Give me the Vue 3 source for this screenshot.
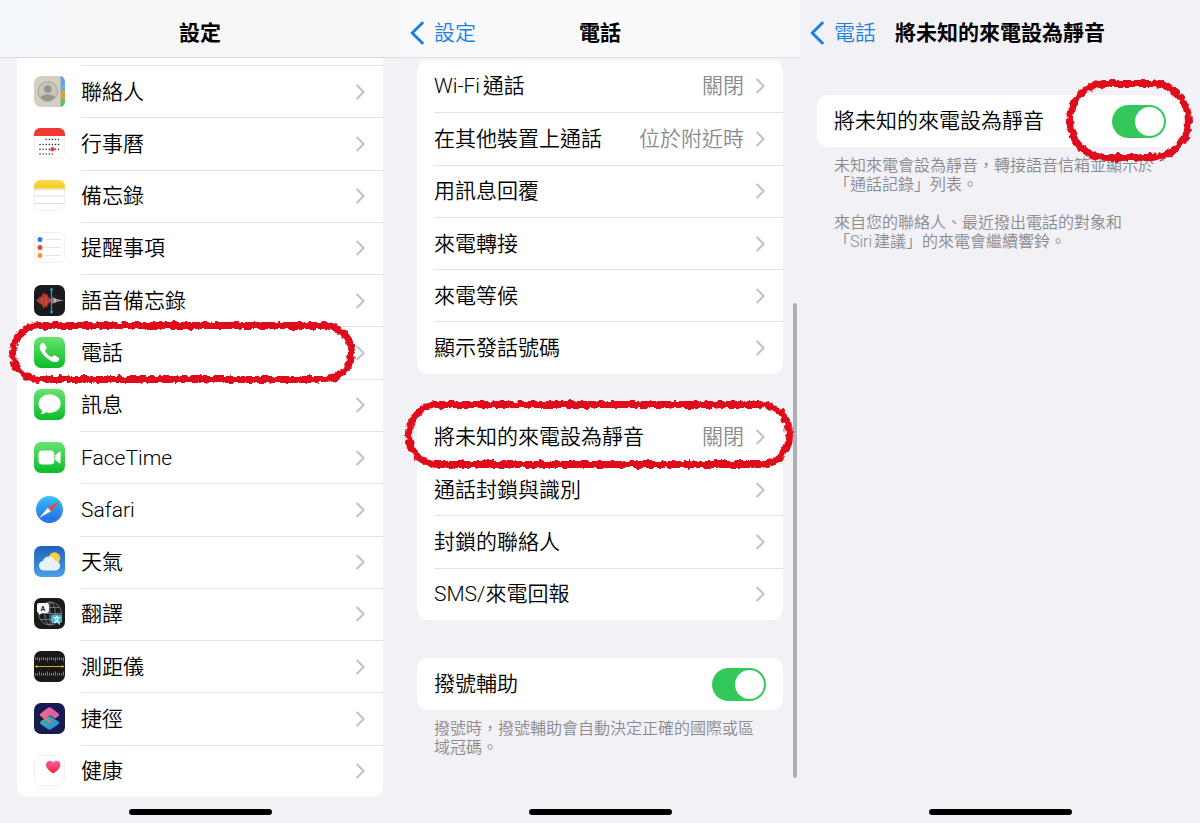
<template>
  <main class="screens" lang="zh-Hant">
    <svg class="defs" width="0" height="0" aria-hidden="true">
      <defs>
        <filter id="crayon" x="-5%" y="-15%" width="110%" height="130%">
          <feTurbulence type="fractalNoise" baseFrequency="0.16" numOctaves="3" seed="4" result="noise" />
          <feDisplacementMap in="SourceGraphic" in2="noise" scale="6" xChannelSelector="R" yChannelSelector="G" />
        </filter>
        <linearGradient id="green" x2="0" y2="1"><stop stop-color="#67e36f" /><stop offset="1" stop-color="#0abc28" /></linearGradient>
        <linearGradient id="yellow" x2="0" y2="1"><stop stop-color="#f9dc55" /><stop offset="1" stop-color="#f3c71c" /></linearGradient>
        <linearGradient id="sky" x2="0" y2="1"><stop stop-color="#1f62b8" /><stop offset="1" stop-color="#4a9fe8" /></linearGradient>
        <linearGradient id="compass" x2="0" y2="1"><stop stop-color="#35c0f7" /><stop offset="1" stop-color="#2365e0" /></linearGradient>
        <linearGradient id="pink" x2="0" y2="1"><stop stop-color="#f45fa8" /><stop offset="1" stop-color="#f4252f" /></linearGradient>
        <linearGradient id="coral" x1="1" x2="0" y2="1"><stop stop-color="#d952c6" /><stop offset="1" stop-color="#f4766a" /></linearGradient>
        <linearGradient id="aqua" y2="1"><stop stop-color="#36b889" /><stop offset="1" stop-color="#1f8df2" /></linearGradient>
      </defs>
    </svg>

    <section class="screen">
      <header class="bar bar-grey">
        <h1>設定</h1>
      </header>
      <ul class="card card-open">
        <li v-for="app in apps" :key="app.name">
          <a class="row" href="#">
            <svg class="icon" viewBox="0 0 31 31" aria-hidden="true" v-html="icons[app.icon]"></svg>
            <span class="cell">
              <span class="label">{{ app.name }}</span>
              <svg class="chevron" viewBox="0 0 9 16" aria-hidden="true"><path d="M1.2 1.5 7.6 8l-6.4 6.5" /></svg>
            </span>
          </a>
          <span v-if="app.marked" class="ring ring-app"></span>
        </li>
      </ul>
      <div class="home"></div>
    </section>

    <section class="screen">
      <header class="bar bar-light">
        <a class="back" href="#">
          <svg viewBox="0 0 14 24" aria-hidden="true"><path d="M12.3 2 2.2 12l10.1 10" /></svg>設定
        </a>
        <h1>電話</h1>
      </header>
      <ul class="card card-calls">
        <li v-for="item in calls" :key="item.name">
          <a class="row" href="#">
            <span class="cell">
              <span class="label">{{ item.name }}</span>
              <span class="value">{{ item.value }}</span>
              <svg class="chevron" viewBox="0 0 9 16" aria-hidden="true"><path d="M1.2 1.5 7.6 8l-6.4 6.5" /></svg>
            </span>
          </a>
        </li>
      </ul>
      <ul class="card card-blocking">
        <li v-for="item in blocking" :key="item.name">
          <a class="row" href="#">
            <span class="cell">
              <span class="label">{{ item.name }}</span>
              <span class="value">{{ item.value }}</span>
              <svg class="chevron" viewBox="0 0 9 16" aria-hidden="true"><path d="M1.2 1.5 7.6 8l-6.4 6.5" /></svg>
            </span>
          </a>
          <span v-if="item.marked" class="ring ring-item"></span>
        </li>
      </ul>
      <div class="card">
        <label class="row switch-row" for="assist">
          <span class="label">撥號輔助</span>
          <input id="assist" v-model="dialAssist" class="switch" type="checkbox" />
        </label>
      </div>
      <div class="note note-end">
        <p>撥號時，撥號輔助會自動決定正確的國際或區域冠碼。</p>
      </div>
      <div class="scroll-thumb"></div>
      <div class="home"></div>
    </section>

    <section class="screen">
      <header class="bar">
        <a class="back" href="#">
          <svg viewBox="0 0 14 24" aria-hidden="true"><path d="M12.3 2 2.2 12l10.1 10" /></svg>電話
        </a>
        <h1>將未知的來電設為靜音</h1>
      </header>
      <div class="card card-silence">
        <label class="row switch-row" for="silence">
          <span class="label">將未知的來電設為靜音</span>
          <input id="silence" v-model="silenceUnknown" class="switch" type="checkbox" />
        </label>
        <span class="ring ring-switch"></span>
      </div>
      <div class="note">
        <p>未知來電會設為靜音，轉接語音信箱並顯示於<br />「通話記錄」列表。</p>
        <p>來自您的聯絡人、最近撥出電話的對象和<br />「Siri建議」的來電會繼續響鈴。</p>
      </div>
      <div class="home"></div>
    </section>
  </main>
</template>

<script setup>
import { ref } from 'vue';

const dialAssist = ref(true);
const silenceUnknown = ref(true);

const apps = [
  { name: '聯絡人', icon: 'contacts' },
  { name: '行事曆', icon: 'calendar' },
  { name: '備忘錄', icon: 'notes' },
  { name: '提醒事項', icon: 'reminders' },
  { name: '語音備忘錄', icon: 'voice' },
  { name: '電話', icon: 'phone', marked: true },
  { name: '訊息', icon: 'messages' },
  { name: 'FaceTime', icon: 'facetime' },
  { name: 'Safari', icon: 'safari' },
  { name: '天氣', icon: 'weather' },
  { name: '翻譯', icon: 'translate' },
  { name: '測距儀', icon: 'measure' },
  { name: '捷徑', icon: 'shortcuts' },
  { name: '健康', icon: 'health' }
];

const calls = [
  { name: 'Wi-Fi通話', value: '關閉' },
  { name: '在其他裝置上通話', value: '位於附近時' },
  { name: '用訊息回覆' },
  { name: '來電轉接' },
  { name: '來電等候' },
  { name: '顯示發話號碼' }
];

const blocking = [
  { name: '將未知的來電設為靜音', value: '關閉', marked: true },
  { name: '通話封鎖與識別' },
  { name: '封鎖的聯絡人' },
  { name: 'SMS/來電回報' }
];

const tile = (fill) => `<rect width="31" height="31" rx="7" fill="${fill}"/>`;
const paper = '<rect x=".5" y=".5" width="30" height="30" rx="6.5" fill="#fff" stroke="#f0f0f2"/>';

// Small dots of the month grid: [y, first x, count]
const dots = [[11.5, 12.2, 5], [16.5, 6, 7], [21.3, 6, 7], [26, 6, 5]]
  .map(([y, x, n]) => Array.from({ length: n }, (_, i) => `<circle cx="${x + i * 3.1}" cy="${y}" r=".8" fill="#333"/>`).join(''))
  .join('');

const wave = [2, 4, 8, 6, 12, 15, 11, 13, 8, 5, 3]
  .map((h, i) => `<path d="M${3.5 + i * 1.3} ${15.5 - h / 2}v${h}" stroke="#c9473f" stroke-width="1.4"/>`)
  .join('') + [6, 5, 4, 3, 2, 1.5, 1, 1].map((h, i) => `<path d="M${19 + i * 1.3} ${15.5 - h / 2}v${h}" stroke="#bbb" stroke-width="1.2"/>`).join('');

const ticks = Array.from({ length: 15 }, (_, i) => {
  const h = i % 4 === 2 ? 4 : 2.5;
  const x = 1.5 + i * 2;
  return `<path d="M${x} ${6.5}v${h}M${x} ${24.5}v${-h}" stroke="#aaa" stroke-width=".7"/>`;
}).join('');

const icons = {
  contacts: `${tile('#d3d0c3')}<path d="M27 0c3 1 4 3 4 7v3.500h-4z" fill="#59aeea"/><path d="M27 10.500h4v5h-4z" fill="#5daee5"/><path d="M27 15.500h4v7h-4z" fill="#f29b24"/><path d="M27 22.500h4V24c0 4-1 6-4 7z" fill="#4dca61"/><path d="M26.500 0v31" stroke="#b8b5aa"/>
    <circle cx="13.800" cy="15.500" r="9.800" fill="#c8c5b9" stroke="#a5a39a"/><circle cx="13.800" cy="13" r="3.700" fill="#96948d"/><path d="M6.500 21c2.500-3.400 12-3.400 14.600 0-3.500 5.100-11.200 5.100-14.600 0z" fill="#96948d"/>`,
  calendar: `${paper}<path d="M0 8V7C0 2.500 2.500 0 7 0h17c4.500 0 7 2.500 7 7v1z" fill="#f03a31"/>${dots}<circle cx="18.500" cy="21.300" r="2.200" fill="#dc4540"/>`,
  notes: `${paper}<path d="M0 8.500V7C0 2.500 2.500 0 7 0h17c4.500 0 7 2.500 7 7v1.500z" fill="url(#yellow)"/><path d="M.5 9.500h30" stroke="#d1cdbd" stroke-width=".7"/><path d="M.5 16h30M.5 23.500h30" stroke="#dedee0"/>`,
  reminders: `${paper}<path d="M11 7.500h16M11 15.500h16M11 23.500h16" stroke="#dedee2" stroke-width=".8"/><circle cx="6" cy="7.500" r="2.500" fill="#3478f6"/><circle cx="6" cy="15.500" r="2.500" fill="#dc4c3f"/><circle cx="6" cy="23.500" r="2.500" fill="#f09a37"/>`,
  voice: `${tile('#1b1b1d')}${wave}<path d="M17.500 5v22" stroke="#3394d2" stroke-width="1.200"/><circle cx="17.500" cy="4.500" r="1.500" fill="#3394d2"/><circle cx="17.500" cy="27" r="1.500" fill="#3394d2"/>`,
  phone: `${tile('url(#green)')}<path d="M7.100 6.800c1.200-1.400 2.500-1.300 3.400 0l1.700 2.700c.7 1.100.5 2-.5 2.900-.8.700-.8 1.200-.3 2 1.400 2.200 3.100 3.900 5.300 5.200.8.500 1.300.5 2-.3.900-1 1.800-1.200 2.900-.5l2.700 1.700c1.300.9 1.400 2.200 0 3.400-1.800 1.800-4.800 1.600-8.500-.7-3.700-2.200-6.600-5.200-8.600-8.600-2-3.300-2-6.100-.1-7.800z" fill="#fff"/>`,
  messages: `${tile('url(#green)')}<ellipse cx="15.600" cy="14.700" rx="11.100" ry="9.400" fill="#fff"/><path d="M8.300 20.500c.1 2-.8 3.500-2 4.500 2.600.1 4.800-.7 6.400-2.200z" fill="#fff"/>`,
  facetime: `${tile('url(#green)')}<rect x="4.500" y="8.500" width="15.800" height="14" rx="3.800" fill="#fff"/><path d="M21.200 13.300 25 10c.9-.7 1.600-.4 1.600.6v9.800c0 1-.7 1.300-1.600.6l-3.800-3.300z" fill="#fff"/>`,
  safari: `<circle cx="15.500" cy="15.500" r="13.500" fill="url(#compass)"/><circle cx="15.500" cy="15.500" r="11.800" fill="none" stroke="#bfe2ff" stroke-opacity=".5" stroke-dasharray=".6 1.250"/><path d="M25.800 7 13.900 13.700l3 3.700z" fill="#e5483f"/><path d="m5.200 23.800 11.700-6.400-3-3.700z" fill="#f3f6fa"/>`,
  weather: `${tile('url(#sky)')}<circle cx="20.500" cy="12" r="5.700" fill="#fbd13f"/><path d="M9.500 24.500a4.800 4.800 0 0 1-.6-9.500 6.300 6.300 0 0 1 12-.1 4.800 4.800 0 0 1 .8 9.600z" fill="#e8f2fc"/>`,
  translate: `${tile('#1a1b1d')}<g fill="none" stroke="#788087" stroke-width=".9"><circle cx="16" cy="15.500" r="11.500"/><ellipse cx="16" cy="15.500" rx="5.300" ry="11.500"/><path d="M4.500 15.500h23M16 4v23M6.500 9.500h19M6.500 21.500h19"/></g><path d="M5 5h8a2 2 0 0 1 2 2v6a2 2 0 0 1-2 2H8l-3 2v-2a2 2 0 0 1-2-2V7a2 2 0 0 1 2-2z" fill="#f7f7f7"/><text x="8.900" y="12.800" text-anchor="middle" font-size="7" font-weight="700" fill="#222">A</text>
    <path d="M19 16.500h7a2 2 0 0 1 2 2V23a2 2 0 0 1-2 2v2.500L23 25h-4a2 2 0 0 1-2-2v-4.500a2 2 0 0 1 2-2z" fill="#43b5ca"/><text x="22.500" y="23.500" text-anchor="middle" font-size="7" font-weight="700" fill="#fff">文</text>`,
  measure: `${tile('#19191a')}${ticks}<path d="M2.500 15.500h26" stroke="#d9c229" stroke-width=".9"/><circle cx="2.500" cy="15.500" r="1.100" fill="#f4db32"/><circle cx="28.500" cy="15.500" r="1.100" fill="#f4db32"/>`,
  shortcuts: `${tile('#191a4f')}<path d="m7.500 17.500 8-4.800 8.600 5.500c1.500 1 1.500 2.200 0 3.200l-6.700 4.700c-1.300.9-2.500.9-3.800 0l-6.500-4.600c-1.500-1-1.300-2.900.4-4z" fill="url(#aqua)"/><path d="m6.800 10.200 6.800-5.300c1.300-1 2.500-1 3.800 0l6.900 5.300c1.200 1 1.200 2 0 3l-3.300 2.400-5-3.400-3.700 2.800 5.300 3.600-2.100 1.600-8.700-7c-1.400-1-1.400-2 0-3z" fill="url(#coral)"/>`,
  health: `${paper}<path d="M19.200 18.500c-4.700-3.100-7.200-5.700-7.200-8.500 0-4.200 5.200-5.800 7.200-2.200 2-3.600 7.200-2 7.200 2.200 0 2.800-2.500 5.400-7.200 8.500z" fill="url(#pink)"/>`
};
</script>

<style>
body {
  margin: 0;
  background: #f2f1f6;
}
</style>

<style scoped>
* {
  box-sizing: border-box;
}

.screens {
  display: grid;
  grid-template-columns: repeat(3, 1fr);
  min-height: 100vh;
  background: #f2f1f6;
  color: #000;
  font-family: Roboto, "Noto Sans CJK TC", sans-serif;
  font-size: 21px;
  font-weight: 350;
  line-height: 28px;
  overflow: hidden;
}

.defs {
  position: absolute;
}

.screen {
  position: relative;
  display: flex;
  flex-direction: column;
  min-width: 0;
}

.bar {
  display: grid;
  grid-template-columns: 1fr auto 1fr;
  align-items: center;
  height: 58px;
  padding: 9px 10px 0;
  border-bottom: 1px solid transparent;
}

.bar-grey {
  background: linear-gradient(90deg, #f3f7fb, #f6f6f7 35%);
  border-color: #d9dade;
}

.bar-light {
  background: #fafafc;
  border-color: #dcdce1;
}

h1 {
  grid-column: 2;
  margin: 0;
  font-size: 21px;
  font-weight: 700;
}

.back {
  display: flex;
  align-items: center;
  gap: 10px;
  color: #1f7fe0;
  text-decoration: none;
}

.back svg {
  width: 14px;
  height: 24px;
  fill: none;
  stroke: currentColor;
  stroke-width: 3;
  stroke-linecap: round;
  stroke-linejoin: round;
}

.card {
  display: grid;
  grid-auto-rows: minmax(52px, 1fr);
  margin: 0 17px;
  padding: 0;
  list-style: none;
  background: #fff;
  border-radius: 11px;
  position: relative;
}

.card-open {
  flex: 1;
  padding-top: 7px;
  border-radius: 0 0 11px 11px;
}

.card-calls {
  flex: 6;
  margin-top: 2px;
}

.card-blocking {
  flex: 4;
  margin-top: 37px;
  margin-bottom: 38px;
}

.card-silence {
  margin-top: 37px;
}

.card li {
  position: relative;
  display: grid;
}

.row {
  display: flex;
  align-items: center;
  gap: 16px;
  padding-left: 17px;
  color: inherit;
  text-decoration: none;
}

.cell {
  flex: 1;
  align-self: stretch;
  display: flex;
  align-items: center;
  gap: 12px;
  padding-right: 18px;
}

.card-open .cell,
li + li .cell {
  border-top: 1px solid #e2e2e4;
}

.label {
  flex: 1;
  white-space: nowrap;
  text-autospace: normal;
}

.value {
  color: #8a8a8e;
  white-space: nowrap;
}

.icon {
  width: 31px;
  height: 31px;
}

.chevron {
  width: 9px;
  height: 16px;
  fill: none;
  stroke: #c2c2c5;
  stroke-width: 2;
  stroke-linecap: round;
  stroke-linejoin: round;
}

.switch-row {
  padding-right: 17px;
}

.switch {
  appearance: none;
  width: 54px;
  height: 33px;
  margin: 0;
  padding: 2px;
  border-radius: 17px;
  background: #e9e9eb;
}

.switch::before {
  content: "";
  display: block;
  width: 29px;
  height: 29px;
  border-radius: 50%;
  background: #fff;
}

.switch:checked {
  background: #34c759;
}

.switch:checked::before {
  margin-left: auto;
}

.note {
  padding: 9px 34px 0;
  color: #8a8a8e;
  font-size: 16px;
  line-height: 19px;
}

.note p {
  margin: 0 0 19px;
  text-autospace: normal;
}

.note-end {
  padding-bottom: 33px;
}

/* hand-drawn marker strokes */
.ring {
  position: absolute;
  z-index: 1;
  border: 7px solid #df0f1a;
  border-radius: 33px;
  filter: url(#crayon);
  pointer-events: none;
}

.ring-app {
  inset: -4px 28px -4px -8px;
}

.ring-item {
  inset: -10px -10px -5px -12px;
}

.ring-switch {
  inset: -15px -9px -14px auto;
  width: 126px;
  border-radius: 42px;
}

.scroll-thumb {
  position: absolute;
  top: 303px;
  right: 3px;
  bottom: 45px;
  width: 4px;
  border-radius: 2px;
  background: #b0b0b4;
}

.home {
  width: 143px;
  height: 6px;
  margin: auto auto 8px;
  border-radius: 3px;
  background: #000;
}

.card-open + .home {
  margin-top: 12px;
}
</style>
